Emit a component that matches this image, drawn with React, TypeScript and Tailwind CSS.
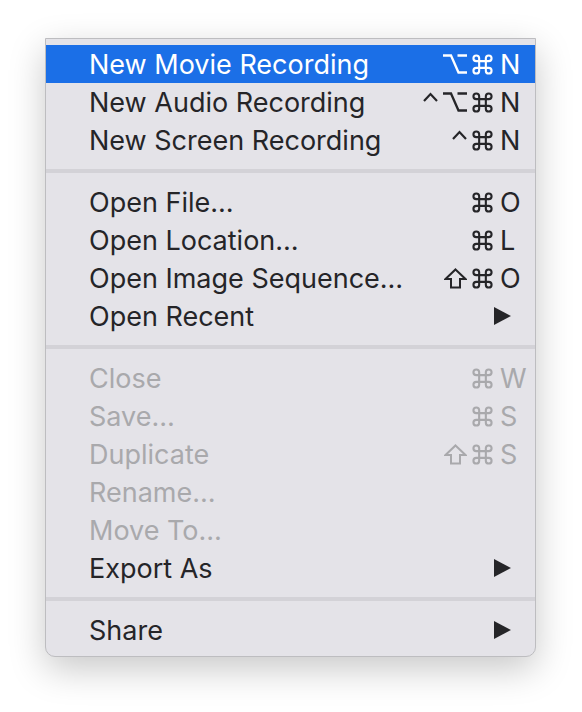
import React from "react"

type Mod = "ctrl" | "opt" | "cmd" | "shift"

type Item = {
    label: string
    mods?: Mod[]
    keyChar?: string
    submenu?: boolean
    disabled?: boolean
    active?: boolean
}

const sections: Item[][] = [
    [
        { label: "New Movie Recording", mods: ["opt", "cmd"], keyChar: "N", active: true },
        { label: "New Audio Recording", mods: ["ctrl", "opt", "cmd"], keyChar: "N" },
        { label: "New Screen Recording", mods: ["ctrl", "cmd"], keyChar: "N" },
    ],
    [
        { label: "Open File…", mods: ["cmd"], keyChar: "O" },
        { label: "Open Location…", mods: ["cmd"], keyChar: "L" },
        { label: "Open Image Sequence…", mods: ["shift", "cmd"], keyChar: "O" },
        { label: "Open Recent", submenu: true },
    ],
    [
        { label: "Close", mods: ["cmd"], keyChar: "W", disabled: true },
        { label: "Save…", mods: ["cmd"], keyChar: "S", disabled: true },
        { label: "Duplicate", mods: ["shift", "cmd"], keyChar: "S", disabled: true },
        { label: "Rename…", disabled: true },
        { label: "Move To…", disabled: true },
        { label: "Export As", submenu: true },
    ],
    [{ label: "Share", submenu: true }],
]

// modifier key symbols drawn as small icons
function ModIcon({ mod }: { mod: Mod }) {
    if (mod === "cmd")
        return (
            <svg width="21" height="21" viewBox="0 0 22 22" fill="none" stroke="currentColor" strokeWidth="2.2">
                <path d="M7.5 7.5 V4.5 A3 3 0 1 0 4.5 7.5 H17.5 A3 3 0 1 0 14.5 4.5 V17.5 A3 3 0 1 0 17.5 14.5 H4.5 A3 3 0 1 0 7.5 17.5 Z" />
            </svg>
        )
    if (mod === "opt")
        return (
            <svg width="24" height="20" viewBox="0 0 24 20" fill="none" stroke="currentColor" strokeWidth="2.3">
                <path d="M0 1.5 H8 L15.5 18.5 H24 M14.5 1.5 H24" />
            </svg>
        )
    if (mod === "ctrl")
        return (
            <svg width="15" height="20" viewBox="0 0 15 20" fill="none" stroke="currentColor" strokeWidth="2.2">
                <path d="M1 9 L7.5 2 L14 9" />
            </svg>
        )
    return (
        <svg width="23" height="21" viewBox="0 0 23 21" fill="none" stroke="currentColor" strokeWidth="2" strokeLinejoin="miter">
            <path d="M11.5 1.5 L21.5 11 H16 V19.5 H7 V11 H1.5 Z" />
        </svg>
    )
}

function Arrow({ color }: { color: string }) {
    return (
        <svg width="17" height="18" viewBox="0 0 17 18" className="mr-[24px]">
            <polygon points="0,0 17,9 0,18" fill={color} />
        </svg>
    )
}

function MenuRow({ item }: { item: Item }) {
    const text = item.active ? "text-white" : item.disabled ? "text-[#a9a9ac]" : "text-[#252528]"
    const bg = item.active ? "bg-[#1b6fe7]" : ""
    return (
        <div className={`h-[38px] flex items-center justify-between pl-[43px] ${bg} ${text}`}>
            <span className="text-[27px] leading-none">{item.label}</span>
            {item.submenu && <Arrow color={item.active ? "#ffffff" : "#252528"} />}
            {item.keyChar && (
                <div className="flex items-center">
                    <div className="flex items-center gap-[5px] mr-[7px]">
                        {item.mods?.map((m) => (
                            <ModIcon key={m} mod={m} />
                        ))}
                    </div>
                    <span className="w-[35px] text-[27px] leading-none">{item.keyChar}</span>
                </div>
            )}
        </div>
    )
}

export default function App() {
    return (
        <div className="min-h-[712px] bg-white pt-[38px] pl-[45px] font-['Inter','DejaVu_Sans',sans-serif]">
            <div className="w-[491px] bg-[#e4e3e8] border border-[#bdbdc0] rounded-b-[10px] pt-[6px] pb-[7px] shadow-[0_12px_36px_rgba(0,0,0,0.22)]">
                {sections.map((section, i) => (
                    <div key={i}>
                        {i > 0 && (
                            <div className="py-[10px]">
                                <div className="h-[4px] bg-[#d3d2d7]" />
                            </div>
                        )}
                        {section.map((item) => (
                            <MenuRow key={item.label} item={item} />
                        ))}
                    </div>
                ))}
            </div>
        </div>
    )
}
